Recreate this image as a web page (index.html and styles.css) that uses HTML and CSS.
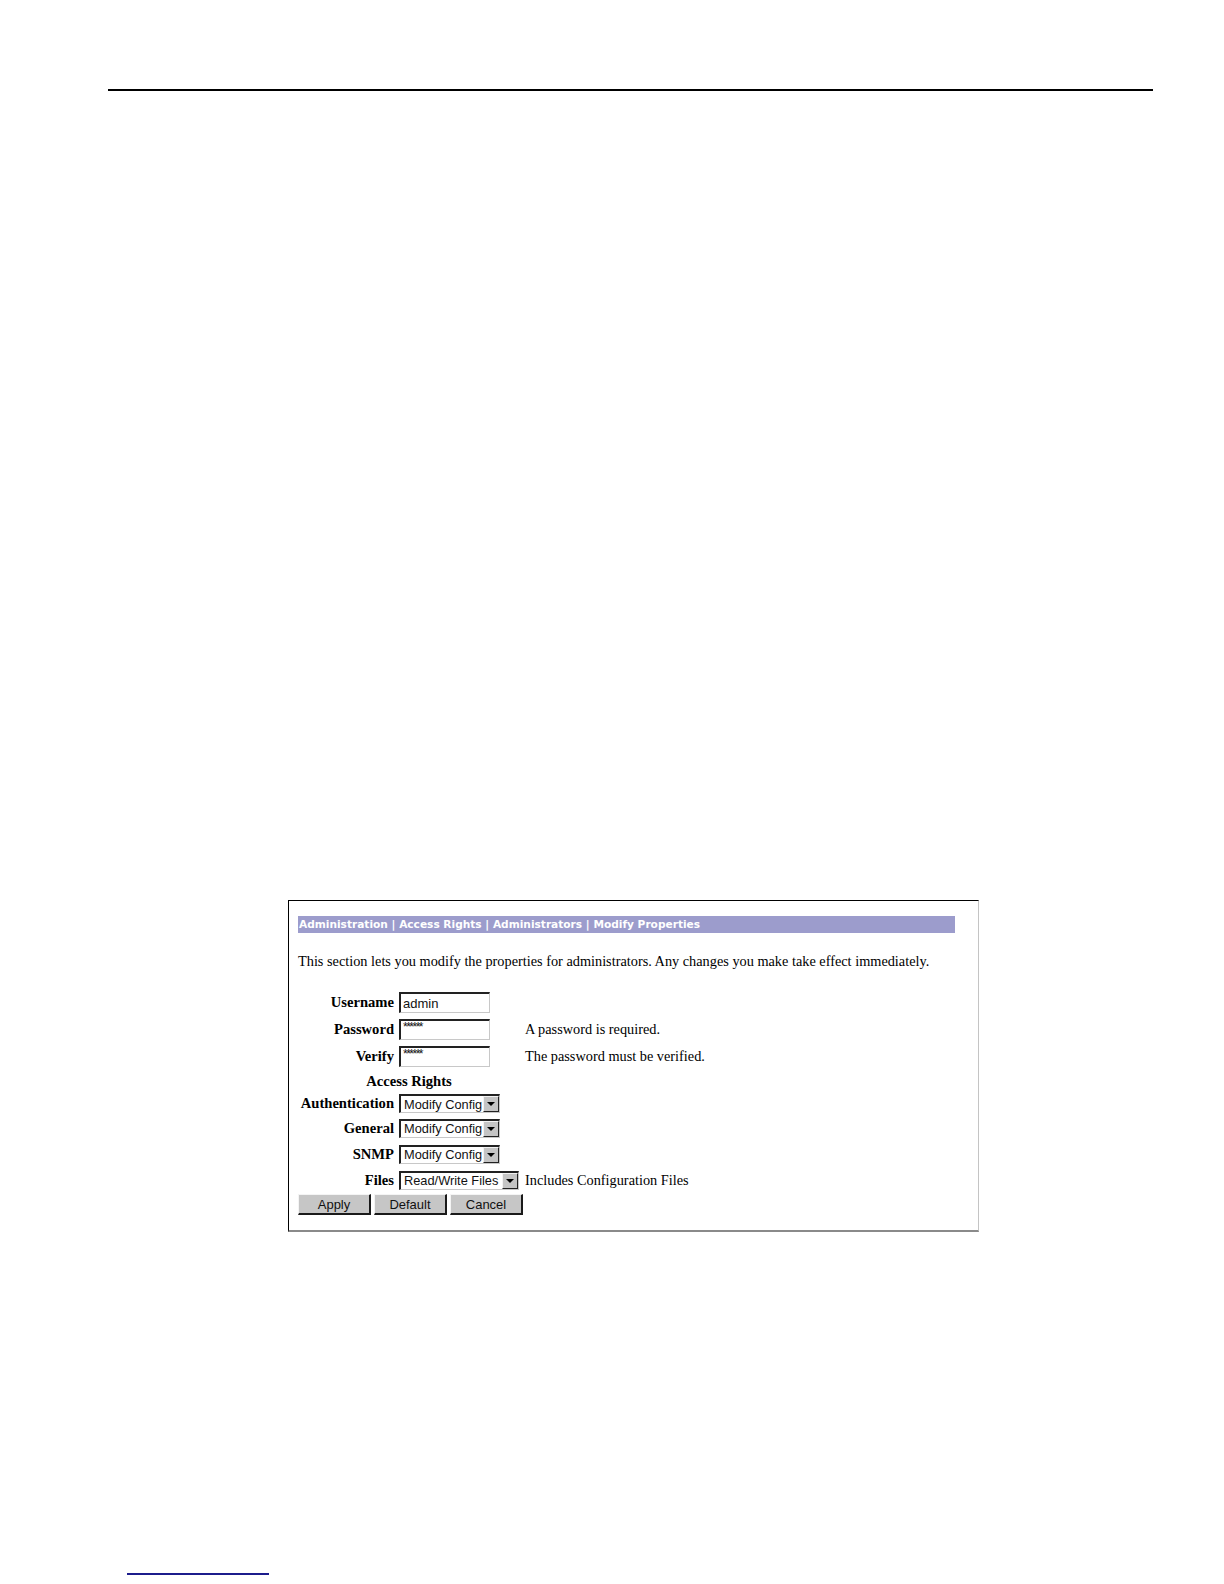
FILE: index.html
```html
<!DOCTYPE html>
<html lang="en">
<head>
<meta charset="utf-8">
<title>Modify Properties</title>
<link rel="stylesheet" href="styles.css">
</head>
<body>
<div class="page">
  <div class="top-rule"></div>
  <div class="shot">
    <div class="crumb">Administration | Access Rights | Administrators | Modify Properties</div>
    <p class="intro">This section lets you modify the properties for administrators. Any changes you make take effect immediately.</p>
    <form class="form">
      <label class="lbl" for="u">Username</label>
      <input class="txt" id="u" type="text" value="admin">
      <span class="note"></span>

      <label class="lbl" for="p">Password</label>
      <input class="txt stars" id="p" type="text" value="******">
      <span class="note">A password is required.</span>

      <label class="lbl" for="v">Verify</label>
      <input class="txt stars" id="v" type="text" value="******">
      <span class="note">The password must be verified.</span>

      <span class="section">Access Rights</span>
      <span class="note"></span>

      <span class="lbl">Authentication</span>
      <span class="sel"><span class="sel-val">Modify Config</span><span class="sel-btn"><span class="tri"></span></span></span>
      <span class="note"></span>

      <span class="lbl">General</span>
      <span class="sel"><span class="sel-val">Modify Config</span><span class="sel-btn"><span class="tri"></span></span></span>
      <span class="note"></span>

      <span class="lbl">SNMP</span>
      <span class="sel"><span class="sel-val">Modify Config</span><span class="sel-btn"><span class="tri"></span></span></span>
      <span class="note"></span>

      <span class="lbl">Files</span>
      <span class="sel sel-wide"><span class="sel-val">Read/Write Files</span><span class="sel-btn"><span class="tri"></span></span></span>
      <span class="note">Includes Configuration Files</span>

      <div class="buttons">
        <button type="button" class="btn">Apply</button>
        <button type="button" class="btn">Default</button>
        <button type="button" class="btn">Cancel</button>
      </div>
    </form>
  </div>
  <div class="foot-rule"></div>
</div>
</body>
</html>
```
FILE: styles.css
```css
html, body {
  margin: 0;
  padding: 0;
  background: #ffffff;
}

.page {
  width: 1224px;
  height: 1584px;
  padding-top: 89px;
  box-sizing: border-box;
  overflow: hidden;
}

.top-rule {
  margin-left: 108px;
  width: 1045px;
  height: 0;
  border-top: 2px solid #000;
}

.shot {
  margin: 809px 0 0 288px;
  width: 691px;
  height: 332px;
  box-sizing: border-box;
  border-top: 1px solid #000;
  border-left: 1px solid #000;
  border-right: 1px solid #c4c4c4;
  border-bottom: 2px solid #8a8a8a;
  padding: 15px 0 0 9px;
}

.crumb {
  width: 657px;
  height: 17px;
  background: #9c9ccc;
  color: #ffffff;
  font-family: "DejaVu Sans", Verdana, sans-serif;
  font-weight: bold;
  font-size: 10.6px;
  line-height: 17px;
  padding-left: 1px;
  box-sizing: border-box;
  white-space: nowrap;
  overflow: hidden;
}

.intro {
  margin: 20px 0 0 0;
  font-family: "Liberation Serif", "Times New Roman", serif;
  font-size: 14.3px;
  line-height: 16px;
  color: #000;
  white-space: nowrap;
}

.form {
  margin-top: 20px;
  display: grid;
  grid-template-columns: 96px 121px 1fr;
  grid-template-rows: 27px 26px 28px 22px 23px 26px 26px 26px 22px;
  column-gap: 5px;
  align-items: center;
  font-family: "Liberation Serif", "Times New Roman", serif;
  font-size: 14.3px;
  color: #000;
}

.lbl {
  text-align: right;
  font-weight: bold;
  font-size: 14.6px;
  white-space: nowrap;
}

.section {
  grid-column: 1 / 3;
  text-align: center;
  font-weight: bold;
  font-size: 14.6px;
}

.note {
  white-space: nowrap;
}

.txt {
  width: 91px;
  height: 21px;
  box-sizing: border-box;
  margin: 0;
  padding: 0 2px;
  border-style: solid;
  border-width: 2px 1px 1px 2px;
  border-color: #222 #c8c8c8 #c8c8c8 #222;
  font-family: "Liberation Sans", Arial, sans-serif;
  font-size: 13px;
  color: #111;
  background: #fff;
  outline: none;
}

.stars {
  font-size: 12px;
  padding-bottom: 6px;
  letter-spacing: -1.5px;
}

.sel {
  display: flex;
  align-items: center;
  width: 101px;
  height: 19px;
  box-sizing: border-box;
  border-style: solid;
  border-width: 2px 1px 1px 2px;
  border-color: #222 #c8c8c8 #c8c8c8 #222;
  background: #fff;
  font-family: "Liberation Sans", Arial, sans-serif;
  font-size: 12.8px;
  color: #111;
}

.sel-wide {
  width: 120px;
}

.sel-val {
  flex: 1;
  padding-left: 3px;
  white-space: nowrap;
  overflow: hidden;
  line-height: 15px;
}

.sel-btn {
  display: flex;
  align-items: center;
  justify-content: center;
  width: 16px;
  height: 16px;
  box-sizing: border-box;
  background: #c4c4c4;
  border-style: solid;
  border-width: 1px;
  border-color: #f2f2f2 #222 #222 #f2f2f2;
  flex-shrink: 0;
}

.tri {
  width: 0;
  height: 0;
  border-left: 4px solid transparent;
  border-right: 4px solid transparent;
  border-top: 4px solid #000;
}

.buttons {
  grid-column: 1 / 4;
  display: flex;
  gap: 3px;
}

.btn {
  width: 73px;
  height: 21px;
  margin: 0;
  padding: 1px 0 0 0;
  box-sizing: border-box;
  background: #c6c6c6;
  border-style: solid;
  border-width: 1px 2px 2px 1px;
  border-color: #f4f4f4 #1a1a1a #1a1a1a #f4f4f4;
  font-family: "Liberation Sans", Arial, sans-serif;
  font-size: 13px;
  color: #111;
}

.foot-rule {
  margin: 341px 0 0 127px;
  width: 142px;
  height: 0;
  border-top: 2px solid #1c1c8c;
}
```
